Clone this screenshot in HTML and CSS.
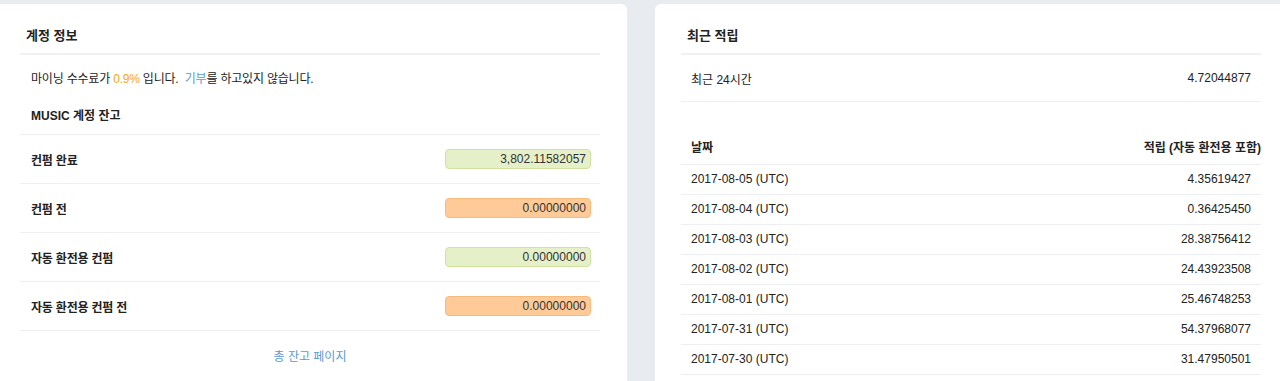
FILE: index.html
```html
<!DOCTYPE html>
<html lang="ko">
<head>
  <meta charset="utf-8">
  <title>계정 정보</title>
  <link rel="stylesheet" href="styles.css">
</head>
<body>
  <div class="dashboard">
    <div class="card">
      <div class="card-title">계정 정보</div>

      <p class="fee-note">
        마이닝 수수료가 <span class="fee">0.9%</span> 입니다.&nbsp; <a href="#" class="link">기부</a>를 하고있지 않습니다.
      </p>

      <div class="section-title">MUSIC 계정 잔고</div>

      <div class="balance-list">
        <div class="balance-row">
          <span class="balance-label">컨펌 완료</span>
          <span class="amount amount-ok">3,802.11582057</span>
        </div>
        <div class="balance-row">
          <span class="balance-label">컨펌 전</span>
          <span class="amount amount-pending">0.00000000</span>
        </div>
        <div class="balance-row">
          <span class="balance-label">자동 환전용 컨펌</span>
          <span class="amount amount-ok">0.00000000</span>
        </div>
        <div class="balance-row">
          <span class="balance-label">자동 환전용 컨펌 전</span>
          <span class="amount amount-pending">0.00000000</span>
        </div>
      </div>

      <div class="card-footer">
        <a href="#" class="link">총 잔고 페이지</a>
      </div>
    </div>

    <div class="card">
      <div class="card-title">최근 적립</div>

      <div class="summary-row">
        <span>최근 24시간</span>
        <span>4.72044877</span>
      </div>

      <table class="earnings">
        <thead>
          <tr>
            <th>날짜</th>
            <th class="num">적립 (자동 환전용 포함)</th>
          </tr>
        </thead>
        <tbody>
          <tr><td>2017-08-05 (UTC)</td><td class="num">4.35619427</td></tr>
          <tr><td>2017-08-04 (UTC)</td><td class="num">0.36425450</td></tr>
          <tr><td>2017-08-03 (UTC)</td><td class="num">28.38756412</td></tr>
          <tr><td>2017-08-02 (UTC)</td><td class="num">24.43923508</td></tr>
          <tr><td>2017-08-01 (UTC)</td><td class="num">25.46748253</td></tr>
          <tr><td>2017-07-31 (UTC)</td><td class="num">54.37968077</td></tr>
          <tr><td>2017-07-30 (UTC)</td><td class="num">31.47950501</td></tr>
        </tbody>
      </table>
    </div>
  </div>
</body>
</html>
```

FILE: styles.css
```css
* {
  margin: 0;
  padding: 0;
  box-sizing: border-box;
}

body {
  font-family: "Liberation Sans", Arial, "Noto Sans CJK KR", sans-serif;
  font-size: 12px;
  color: #222;
  background: #e8ecf1;
  overflow: hidden;
}

.dashboard {
  display: grid;
  grid-template-columns: 633px 633px;
  gap: 28px;
  margin-left: -6px;
  padding-top: 4px;
}

.card {
  background: white;
  border-radius: 6px;
  padding: 0 27px 0 26px;
  height: 400px;
}

.card-title {
  font-size: 13px;
  font-weight: 600;
  color: #222;
  padding: 0 6px;
  height: 51px;
  line-height: 64px;
  border-bottom: 2px solid #eff1f4;
}

.fee-note {
  padding: 15px 11px 0;
  line-height: 18px;
  height: 49px;
  letter-spacing: -0.2px;
}

.fee {
  color: #f5a623;
}

.link {
  color: #5b9bd1;
  text-decoration: none;
}

.section-title {
  font-weight: 700;
  padding: 5px 11px 0;
  height: 30px;
  line-height: 14px;
}

.balance-list {
  border-top: 1px solid #eceef1;
}

.balance-row {
  display: flex;
  align-items: center;
  justify-content: space-between;
  height: 49px;
  padding: 0 9px 0 11px;
  border-bottom: 1px solid #eceef1;
}

.balance-label {
  font-weight: 700;
  letter-spacing: -0.2px;
}

.amount {
  width: 146px;
  height: 20px;
  line-height: 18px;
  text-align: right;
  padding: 0 4px;
  border-radius: 4px;
  border: 1px solid;
  color: #333;
}

.amount-ok {
  background: #e5f0c8;
  border-color: #d0e2a0;
}

.amount-pending {
  background: #fecb98;
  border-color: #f6ba7c;
}

.card-footer {
  text-align: center;
  padding-top: 16px;
}

.summary-row {
  display: flex;
  justify-content: space-between;
  align-items: center;
  height: 47px;
  padding: 0 10px;
  border-bottom: 1px solid #eceef1;
}

.earnings {
  width: 100%;
  border-collapse: collapse;
  margin-top: 28px;
}

.earnings th {
  text-align: left;
  font-weight: 700;
  height: 34px;
  padding: 0 10px;
  border-bottom: 1px solid #eceef1;
}

.earnings td {
  height: 30px;
  padding: 0 10px;
  border-bottom: 1px solid #eceef1;
}

.earnings .num {
  text-align: right;
}

.earnings th.num {
  padding-right: 0;
}
```
